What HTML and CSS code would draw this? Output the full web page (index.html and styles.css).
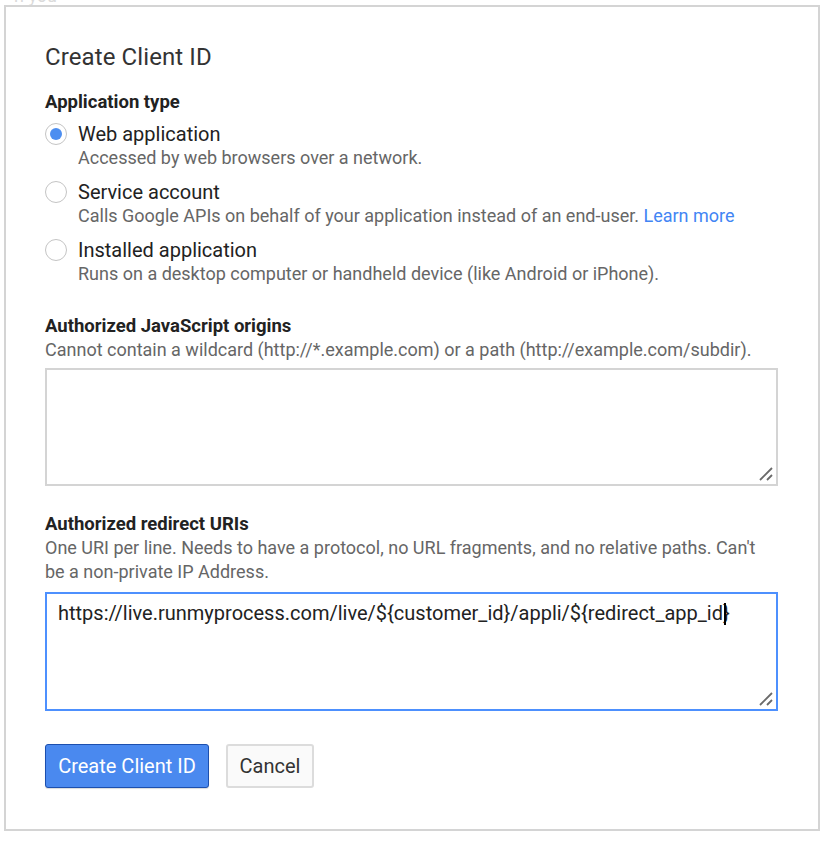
FILE: index.html
```html
<!DOCTYPE html>
<html lang="en">
<head>
<meta charset="utf-8">
<title>Create Client ID</title>
<link rel="stylesheet" href="styles.css">
</head>
<body>
<span class="backdrop-text">n you</span>
<div class="dialog">
  <h1 class="title">Create Client ID</h1>

  <div class="section-label app-type">Application type</div>
  <div class="radio-list">
    <div class="radio-item">
      <span class="radio checked"></span>
      <div class="radio-text">
        <div class="radio-label">Web application</div>
        <div class="desc">Accessed by web browsers over a network.</div>
      </div>
    </div>
    <div class="radio-item">
      <span class="radio"></span>
      <div class="radio-text">
        <div class="radio-label">Service account</div>
        <div class="desc">Calls Google APIs on behalf of your application instead of an end-user. <a class="link" href="#">Learn more</a></div>
      </div>
    </div>
    <div class="radio-item">
      <span class="radio"></span>
      <div class="radio-text">
        <div class="radio-label">Installed application</div>
        <div class="desc">Runs on a desktop computer or handheld device (like Android or iPhone).</div>
      </div>
    </div>
  </div>

  <div class="section-label js-label">Authorized JavaScript origins</div>
  <div class="desc">Cannot contain a wildcard (http://*.example.com) or a path (http://example.com/subdir).</div>
  <div class="textbox origins">
    <svg class="grip" width="14" height="14" viewBox="0 0 14 14"><path d="M1 13 L13 1 M8 13 L13 8" stroke="#6a6a6a" stroke-width="1.8" fill="none"/></svg>
  </div>

  <div class="section-label redirect-label">Authorized redirect URIs</div>
  <div class="desc">One URI per line. Needs to have a protocol, no URL fragments, and no relative paths. Can't be a non-private IP Address.</div>
  <div class="textbox redirect focused">
    <span class="uri">https://live.runmyprocess.com/live/${customer_id}/appli/${redirect_app_id<span class="caret"></span>}</span>
    <svg class="grip" width="14" height="14" viewBox="0 0 14 14"><path d="M1 13 L13 1 M8 13 L13 8" stroke="#6a6a6a" stroke-width="1.8" fill="none"/></svg>
  </div>

  <div class="actions">
    <button class="btn primary">Create Client ID</button>
    <button class="btn secondary">Cancel</button>
  </div>
</div>
</body>
</html>
```
FILE: styles.css
```css
html, body {
  margin: 0;
  padding: 0;
  background: #ffffff;
}
body {
  font-family: Roboto, "Liberation Sans", Arial, sans-serif;
  color: #222;
  position: relative;
  width: 827px;
  height: 841px;
  overflow: hidden;
}
.backdrop-text {
  position: absolute;
  left: 14px;
  top: -13px;
  font-size: 18px;
  line-height: 18px;
  color: #dadada;
}
.dialog {
  position: relative;
  box-sizing: border-box;
  margin: 5px 0 0 4px;
  width: 816px;
  border: 2px solid #d4d4d4;
  background: #fff;
  padding: 34px 40px 41px 39px;
}
.title {
  margin: 0;
  font-size: 24px;
  line-height: 32px;
  font-weight: 400;
  color: #333;
  letter-spacing: 0.1px;
}
.section-label {
  margin-top: 16px;
  font-size: 18.5px;
  line-height: 24px;
  font-weight: 700;
  color: #222;
}
.section-label.app-type {
  margin-top: 17px;
}
.radio-list {
  margin-top: 8px;
  display: flex;
  flex-direction: column;
  gap: 10px;
}
.radio-item {
  display: flex;
  align-items: flex-start;
}
.radio {
  box-sizing: border-box;
  width: 22px;
  height: 22px;
  margin-top: 1px;
  margin-right: 11px;
  border: 1.5px solid #c4c4c4;
  border-radius: 50%;
  background: #fff;
  display: flex;
  align-items: center;
  justify-content: center;
  flex: none;
}
.radio.checked::after {
  content: "";
  width: 12px;
  height: 12px;
  border-radius: 50%;
  background: #4d8ef0;
}
.radio-label {
  font-size: 20px;
  line-height: 24px;
  color: #222;
}
.desc {
  font-size: 18px;
  line-height: 24px;
  color: #666;
}
.link {
  color: #4285f4;
  text-decoration: none;
}
.js-label {
  margin-top: 28px;
}
.redirect-label {
  margin-top: 26px;
}
.textbox {
  position: relative;
  box-sizing: border-box;
  border: 2px solid #d4d4d4;
  background: #fff;
  padding: 7px 11px;
  font-size: 20px;
  line-height: 24px;
  color: #222;
}
.textbox.origins {
  margin-top: 6px;
  height: 118px;
}
.textbox.redirect {
  margin-top: 8px;
  height: 119px;
}
.textbox.focused {
  border-color: #4d90fe;
}
.caret {
  display: inline-block;
  width: 2px;
  height: 22px;
  background: #000;
  vertical-align: -5px;
  margin-left: 1px;
  margin-right: -3px;
  position: relative;
  z-index: 1;
}
.grip {
  position: absolute;
  right: 3px;
  bottom: 3px;
}
.actions {
  margin-top: 33px;
  display: flex;
  gap: 17px;
}
.btn {
  box-sizing: border-box;
  height: 44px;
  font-family: Roboto, "Liberation Sans", Arial, sans-serif;
  font-size: 20px;
  border-radius: 3px;
  padding: 0;
  cursor: pointer;
}
.btn.primary {
  width: 164px;
  background: #4a89ef;
  border: 1px solid #1c4fae;
  color: #fff;
  box-shadow: 0 1px 1px rgba(0,0,0,0.15);
}
.btn.secondary {
  width: 88px;
  background: #fafafa;
  border: 2px solid #dcdcdc;
  color: #333;
}
```
